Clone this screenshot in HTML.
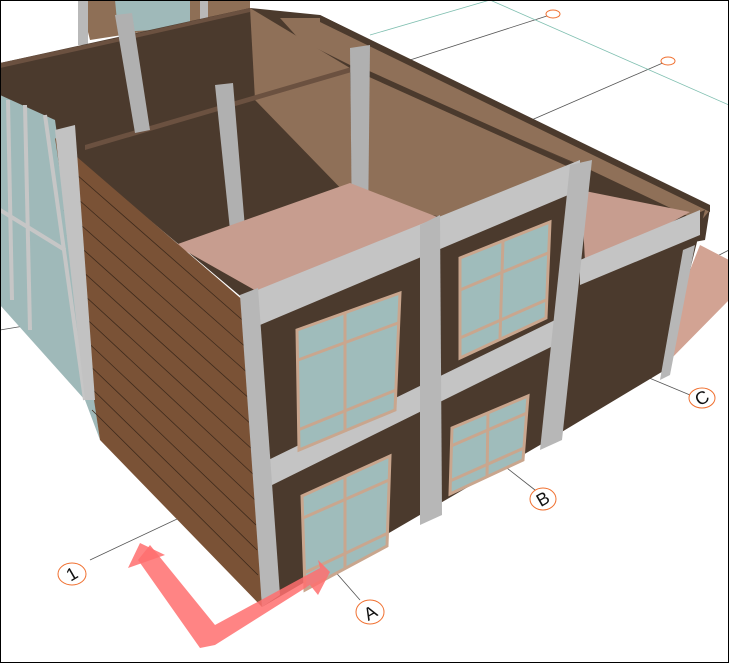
<!DOCTYPE html>
<html><head><meta charset="utf-8"><style>
html,body{margin:0;padding:0;background:#fff}
svg{display:block}
text{font-family:"Liberation Sans",sans-serif}
</style></head><body>
<svg width="729" height="663" viewBox="0 0 729 663" xmlns="http://www.w3.org/2000/svg">
<rect x="0" y="0" width="729" height="663" fill="#fff"/>
<g stroke="#555" stroke-width="0.8" fill="none">
<line x1="0" y1="330" x2="60" y2="320"/>
<line x1="90" y1="560" x2="260" y2="480"/>
<line x1="255" y1="480" x2="360" y2="600"/>
<line x1="420" y1="400" x2="535" y2="490"/>
<line x1="570" y1="345" x2="690" y2="395"/>
<line x1="410" y1="60" x2="550" y2="15"/>
<line x1="520" y1="125" x2="665" y2="62"/>
<line x1="690" y1="270" x2="729" y2="250"/>
</g>
<g stroke="#7fbfb0" stroke-width="0.8" fill="none">
<line x1="370" y1="35" x2="490" y2="0"/>
<line x1="490" y1="0" x2="729" y2="105"/>
</g>
<polygon points="80,0 250,0 250,15 90,40" fill="#8e6f56"/>
<polygon points="115,0 190,0 190,28 118,32" fill="#9fb9b9"/>
<rect x="78" y="0" width="10" height="45" fill="#b9b9b9"/>
<rect x="200" y="0" width="8" height="20" fill="#b9b9b9"/>
<!-- backing -->
<polygon points="0,63 250,8 320,15 710,208 705,240 585,262 580,300 245,300 90,170 0,100" fill="#4b3a2d"/>
<polygon points="0,63 117,38 250,8 250,12 117,42 0,68" fill="#6b5140"/>
<polygon points="250,8 350,68 352,200 255,100" fill="#8f7058"/>
<polygon points="280,18 320,18 710,210 700,222 580,165 360,70 300,40" fill="#8f7058"/>
<polygon points="320,15 710,205 710,212 320,22" fill="#4b3a2d"/>
<polygon points="358,66 580,166 580,245 358,200" fill="#8f7058"/>
<polygon points="358,66 580,166 580,172 358,72" fill="#4b3a2d"/>
<polygon points="85,145 355,66 355,71 85,150" fill="#6b5140"/>
<polygon points="115,15 132,13 150,130 135,133" fill="#b0b0b0"/>
<polygon points="215,85 233,83 245,228 230,230" fill="#b0b0b0"/>
<polygon points="350,48 370,45 368,230 352,232" fill="#b0b0b0"/>
<polygon points="175,245 350,183 440,218 258,292" fill="#c79d8f"/>
<polygon points="580,190 690,212 600,262 580,260" fill="#c79d8f"/>
<polygon points="700,245 729,260 729,300 665,365 690,270" fill="#d2a393"/>
<polygon points="0,95 55,120 100,440 85,400 0,305" fill="#9fb9b9"/>
<g stroke="#c6c6c6" stroke-width="4"><line x1="8" y1="100" x2="12" y2="300"/><line x1="25" y1="105" x2="30" y2="330"/><line x1="0" y1="210" x2="65" y2="250"/><line x1="45" y1="115" x2="85" y2="400"/></g>
<polygon points="55,138 245,302 262,607 100,440" fill="#7a5236"/>
<g stroke="#3e2a1c" stroke-width="0.8">
<line x1="60" y1="160" x2="248" y2="325"/><line x1="62" y1="185" x2="249" y2="350"/><line x1="64" y1="210" x2="250" y2="375"/><line x1="67" y1="235" x2="251" y2="400"/><line x1="70" y1="260" x2="252" y2="425"/><line x1="73" y1="285" x2="253" y2="450"/><line x1="77" y1="310" x2="254" y2="475"/><line x1="80" y1="335" x2="255" y2="500"/><line x1="84" y1="360" x2="256" y2="525"/><line x1="88" y1="385" x2="257" y2="550"/><line x1="92" y1="410" x2="258" y2="575"/>
</g>
<polygon points="245,300 580,165 585,262 705,210 665,370 540,445 262,607" fill="#4b3a2d"/>
<polygon points="245,295 580,160 580,190 260,325" fill="#c4c4c4"/>
<polygon points="258,465 555,320 555,345 262,490" fill="#c4c4c4"/>
<polygon points="580,260 700,210 700,235 580,285" fill="#c4c4c4"/>
<polygon points="240,295 258,288 280,595 262,607" fill="#b7b7b7"/>
<polygon points="420,225 440,215 442,515 420,525" fill="#b7b7b7"/>
<polygon points="570,165 592,160 562,440 540,450" fill="#b7b7b7"/>
<polygon points="683,250 695,245 670,375 660,380" fill="#b7b7b7"/>
<polygon points="55,130 75,125 95,400 85,400" fill="#c2c2c2"/>
<g fill="#9fbcbb" stroke="#c9a68e" stroke-width="3">
<polygon points="297,330 400,293 395,410 299,450"/>
<polygon points="460,258 550,222 546,318 460,358"/>
<polygon points="302,496 390,456 387,546 305,590"/>
<polygon points="452,428 528,396 523,460 450,494"/>
</g>
<g stroke="#c9a68e" stroke-width="3">
<line x1="345" y1="313" x2="345" y2="432"/><line x1="298" y1="360" x2="398" y2="323"/><line x1="298" y1="430" x2="396" y2="390"/>
<line x1="503" y1="240" x2="500" y2="338"/><line x1="460" y1="290" x2="548" y2="253"/><line x1="460" y1="338" x2="546" y2="300"/>
<line x1="345" y1="476" x2="345" y2="568"/><line x1="303" y1="518" x2="389" y2="480"/><line x1="304" y1="573" x2="388" y2="533"/>
<line x1="488" y1="413" x2="487" y2="477"/><line x1="451" y1="446" x2="527" y2="413"/><line x1="450" y1="481" x2="524" y2="448"/>
</g>
<g fill="#ff6f6f" fill-opacity="0.85">
<polygon points="138,560 150,545 215,625 320,568 318,560 330,572 318,595 310,585 215,645 200,648"/>
<polygon points="128,568 140,543 165,555"/>
</g>
<g fill="#fff" stroke="#f07030" stroke-width="1">
<ellipse cx="72" cy="574" rx="14" ry="11"/>
<ellipse cx="370" cy="612" rx="14" ry="12"/>
<ellipse cx="543" cy="499" rx="13" ry="11"/>
<ellipse cx="702" cy="398" rx="13" ry="10"/>
<ellipse cx="553" cy="14" rx="7" ry="4"/>
<ellipse cx="668" cy="61" rx="7" ry="4"/>
</g>
<g font-size="18" fill="#111" text-anchor="middle">
<text x="72" y="580" transform="rotate(-30 72 574)">1</text>
<text x="370" y="619" transform="rotate(-30 370 612)">A</text>
<text x="543" y="505" transform="rotate(-30 543 499)">B</text>
<text x="702" y="404" transform="rotate(-30 702 398)">C</text>
</g>
<rect x="0.5" y="0.5" width="728" height="662" fill="none" stroke="#000" stroke-width="1"/>
</svg>
</body></html>
